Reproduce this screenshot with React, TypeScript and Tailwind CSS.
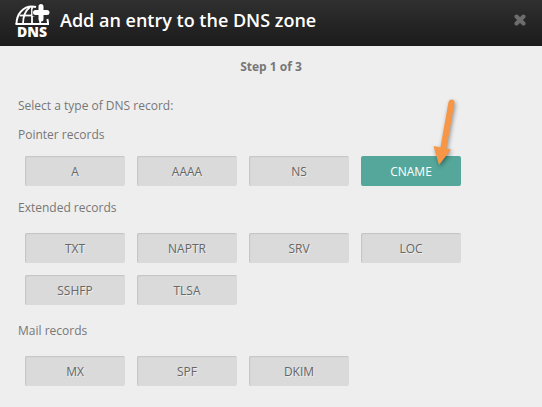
import { useState } from "react";

const groups = [
  {
    title: "Pointer records",
    types: ["A", "AAAA", "NS", "CNAME"],
    className: "mt-[9px]",
    gridClassName: "mt-[11px]",
  },
  {
    title: "Extended records",
    types: ["TXT", "NAPTR", "SRV", "LOC", "SSHFP", "TLSA"],
    className: "mt-3",
    gridClassName: "mt-[15px]",
  },
  {
    title: "Mail records",
    types: ["MX", "SPF", "DKIM"],
    className: "mt-4",
    gridClassName: "mt-[15px]",
  },
];

const DnsIcon = () => (
  <svg width="36" height="42" viewBox="0 0 36 42" fill="none" aria-hidden="true">
    <g stroke="#fff">
      <path d="M1.500 22C1.500 11.500 8.500 4.500 17 4.500c1.500 0 2.500.1 4 .5M33 22c0-1.500-.2-3-.6-5" strokeWidth="2" />
      <path d="M17 4.500v17.500M15 5c-5 4-7 9.500-7 17M24.500 16c.6 2 .8 3.800.8 6" strokeWidth="1.8" />
      <path d="M4.500 13.500h15" strokeWidth="1.8" />
      <path d="M0.500 22h33.500" strokeWidth="2.200" />
    </g>
    <path d="M26 1v18M17.500 10.500h17" stroke="#292929" strokeWidth="7" />
    <path d="M26 4.500v12.500M20.500 10.500h11.500" stroke="#fff" strokeWidth="5" strokeLinecap="round" />
    <text
      x="17"
      y="35"
      textAnchor="middle"
      fill="#fff"
      className="font-['Open_Sans',sans-serif] text-sm font-extrabold"
    >
      DNS
    </text>
  </svg>
);

const CloseIcon = () => (
  <svg width="12" height="12" viewBox="0 0 12 12" aria-hidden="true">
    <path d="M2.500 2.500l7 7M9.500 2.500l-7 7" stroke="#6d6d6d" strokeWidth="4" strokeLinecap="round" />
  </svg>
);

const Arrow = () => (
  <svg
    width="30"
    height="76"
    viewBox="0 0 30 76"
    className="pointer-events-none absolute right-0 bottom-[15px] drop-shadow-[1px_2px_2px_rgba(0,0,0,0.4)]"
    aria-hidden="true"
  >
    <path d="M20.500 7.500L12 55" stroke="#f79646" strokeWidth="6" strokeLinecap="round" />
    <path d="M2.500 51l17.500 3.500L8 70z" fill="#f79646" />
  </svg>
);

const App = () => {
  const [selected, setSelected] = useState("CNAME");

  return (
    <div className="min-h-screen bg-[#eee] font-['Open_Sans',sans-serif] text-xs leading-5 text-[#777]">
      <header className="flex h-[46px] items-center bg-linear-to-b from-[#303030] to-[#1b1b1b] pr-4 pl-[15px]">
        <DnsIcon />
        <h1 className="ml-[9px] flex-1 pb-1.5 text-lg font-semibold text-white">
          Add an entry to the DNS zone
        </h1>
        <button type="button" aria-label="Close" className="pb-1.5">
          <CloseIcon />
        </button>
      </header>

      <main className="px-[18px] pt-[11px] pb-5">
        <h2 className="text-center font-bold">Step 1 of 3</h2>
        <p className="mt-[19px]">Select a type of DNS record:</p>

        {groups.map((group) => (
          <section key={group.title} className={group.className}>
            <h3>{group.title}</h3>
            <div className={`flex flex-wrap gap-3 pl-[7px] ${group.gridClassName}`}>
              {group.types.map((type) => (
                <div key={type} className="relative">
                  <button
                    type="button"
                    aria-pressed={selected === type}
                    onClick={() => setSelected(type)}
                    className={
                      selected === type
                        ? "block h-[30px] w-[100px] rounded-xs bg-[#54a79a] pt-0.5 text-white"
                        : "block h-[30px] w-[100px] rounded-xs bg-[#dadada] pt-0.5 text-[#666] inset-shadow-[1px_1px_1px_#c4c4c4] text-shadow-[1px_1px_0_#eee]"
                    }
                  >
                    {type}
                  </button>
                  {type === "CNAME" && <Arrow />}
                </div>
              ))}
            </div>
          </section>
        ))}
      </main>
    </div>
  );
};

export default App;
